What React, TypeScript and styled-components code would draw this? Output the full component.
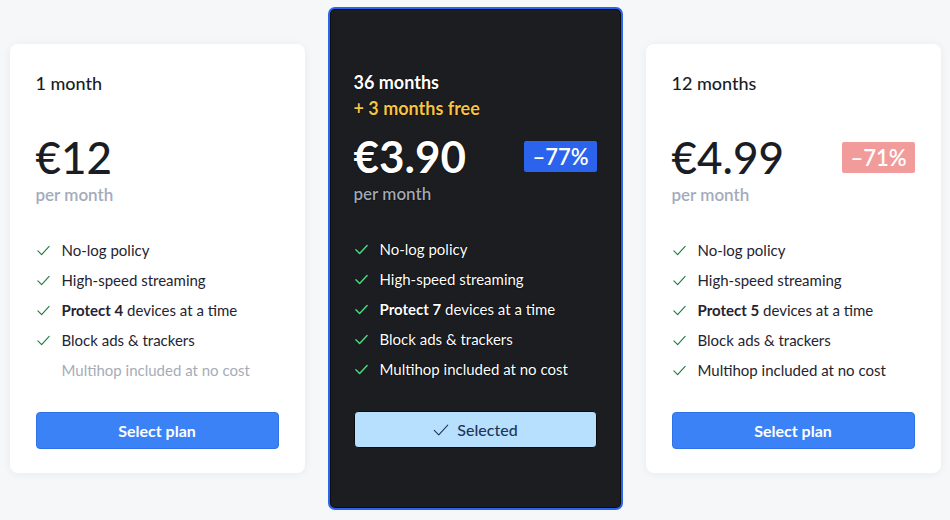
import React from 'react';
import styled, { createGlobalStyle, css } from 'styled-components';

const Global = createGlobalStyle`
  html, body { margin: 0; padding: 0; background: #f6f7f9; }
  body { font-family: Lato, "Noto Sans", "Liberation Sans", sans-serif; -webkit-font-smoothing: antialiased; }
`;

const Page = styled.div`
  box-sizing: border-box;
  height: 520px;
  padding-bottom: 3px;
  display: flex;
  align-items: center;
  justify-content: center;
  gap: 23px;
`;

const Card = styled.div<{ $featured?: boolean }>`
  box-sizing: border-box;
  width: 295px;
  display: flex;
  flex-direction: column;
  padding: 26px 26px 24px;
  background: #ffffff;
  border-radius: 8px;
  box-shadow: 0 1px 10px rgba(20, 30, 50, 0.06);
  color: #1a1d24;
  ${p =>
    p.$featured &&
    css`
      background: #1b1d20;
      border: 2px solid #2c64ef;
      border-radius: 7px;
      box-shadow: inset 0 0 0 1px #0b0c0e;
      padding: 60px 24px 60px;
      color: #ffffff;
      text-shadow: 0 0 1px #000, 0 0 1px #000;
    `}
`;

const TitleBlock = styled.div`
  min-height: 52px;
`;

const Title = styled.div<{ $bold?: boolean }>`
  font-size: 18px;
  line-height: 26px;
  font-weight: ${p => (p.$bold ? 700 : 500)};
`;

const Bonus = styled.div`
  font-size: 18px;
  line-height: 26px;
  font-weight: 700;
  color: #f6c445;
`;

const PriceRow = styled.div`
  margin-top: 13px;
  display: flex;
  align-items: center;
  justify-content: space-between;
`;

const Price = styled.div<{ $bold?: boolean }>`
  font-size: 44px;
  line-height: 44px;
  font-weight: ${p => (p.$bold ? 700 : 500)};
`;

const Badge = styled.div<{ $tone: 'blue' | 'pink' }>`
  font-size: 22px;
  line-height: 29px;
  font-weight: 600;
  padding: 1px 8px;
  border-radius: 2px;
  color: #ffffff;
  text-shadow: none;
  background: ${p => (p.$tone === 'blue' ? '#2b63ec' : '#f29b9b')};
`;

const Per = styled.div<{ $dark?: boolean }>`
  margin-top: 6px;
  font-size: 17px;
  line-height: 20px;
  font-weight: 600;
  color: ${p => (p.$dark ? '#a4a9b3' : '#a3abbb')};
`;

const Features = styled.ul`
  list-style: none;
  margin: 30px 0 0;
  padding: 0;
`;

const Feature = styled.li<{ $off?: boolean; $dark?: boolean }>`
  height: 30px;
  display: flex;
  align-items: center;
  gap: 11px;
  font-size: 15px;
  font-weight: 400;
  color: ${p => (p.$off ? '#a6acb8' : p.$dark ? '#ffffff' : '#1f2430')};
  b { font-weight: 700; }
`;

const IconSlot = styled.span`
  width: 15px;
  height: 15px;
  display: inline-flex;
  align-items: center;
  justify-content: center;
  flex: none;
`;

const Button = styled.button<{ $selected?: boolean }>`
  margin-top: 27px;
  height: 37px;
  width: 100%;
  box-sizing: border-box;
  display: flex;
  align-items: center;
  justify-content: center;
  gap: 7px;
  border-radius: 4px;
  font-family: inherit;
  font-size: 16px;
  cursor: pointer;
  text-shadow: none;
  ${p =>
    p.$selected
      ? css`
          background: #b6e0fe;
          border: 1px solid #0b0c0e;
          color: #1d3557;
          font-weight: 500;
        `
      : css`
          background: #3b82f6;
          border: 1px solid #2f72e6;
          color: #ffffff;
          font-weight: 700;
        `}
`;

const Check = ({ color, size = 15, width = 1.6 }: { color: string; size?: number; width?: number }) => (
  <svg width={size} height={size} viewBox="0 0 24 24" fill="none" stroke={color} strokeWidth={width} strokeLinecap="round" strokeLinejoin="round">
    <polyline points="21 5.5 9 18.5 3 12.5" />
  </svg>
);

type Plan = {
  title: string;
  bonus?: string;
  price: string;
  badge?: { text: string; tone: 'blue' | 'pink' };
  devices: number;
  multihop: boolean;
  featured?: boolean;
};

const plans: Plan[] = [
  { title: '1 month', price: '€12', devices: 4, multihop: false },
  { title: '36 months', bonus: '+ 3 months free', price: '€3.90', badge: { text: '–77%', tone: 'blue' }, devices: 7, multihop: true, featured: true },
  { title: '12 months', price: '€4.99', badge: { text: '–71%', tone: 'pink' }, devices: 5, multihop: true },
];

export default function App() {
  return (
    <>
      <Global />
      <Page>
        {plans.map(plan => {
          const dark = !!plan.featured;
          const checkColor = dark ? '#4ade80' : '#15803d';
          const items: { node: React.ReactNode; on: boolean }[] = [
            { node: 'No-log policy', on: true },
            { node: 'High-speed streaming', on: true },
            { node: (<><b>Protect {plan.devices}</b> devices at a time</>), on: true },
            { node: 'Block ads & trackers', on: true },
            { node: 'Multihop included at no cost', on: plan.multihop },
          ];
          return (
            <Card key={plan.title} $featured={dark}>
              <TitleBlock>
                <Title $bold={dark}>{plan.title}</Title>
                {plan.bonus && <Bonus>{plan.bonus}</Bonus>}
              </TitleBlock>
              <PriceRow>
                <Price $bold={dark}>{plan.price}</Price>
                {plan.badge && <Badge $tone={plan.badge.tone}>{plan.badge.text}</Badge>}
              </PriceRow>
              <Per $dark={dark}>per month</Per>
              <Features>
                {items.map((it, i) => (
                  <Feature key={i} $off={!it.on} $dark={dark}>
                    <IconSlot>{it.on && <Check color={checkColor} width={dark ? 2.2 : 1.8} />}</IconSlot>
                    <span>{it.node}</span>
                  </Feature>
                ))}
              </Features>
              {dark ? (
                <Button $selected>
                  <Check color="#1d3557" size={18} width={1.4} />
                  Selected
                </Button>
              ) : (
                <Button>Select plan</Button>
              )}
            </Card>
          );
        })}
      </Page>
    </>
  );
}
